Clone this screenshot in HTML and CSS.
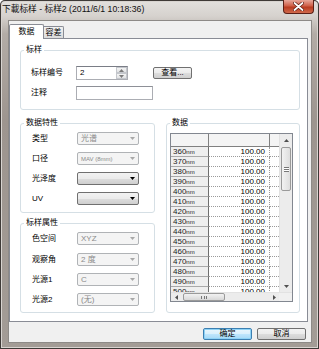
FILE: index.html
```html
<!DOCTYPE html>
<html lang="zh">
<head>
<meta charset="utf-8">
<title>下載标样</title>
<link rel="stylesheet" href="styles.css">
</head>
<body>
<div class="win">
  <div class="titlebar">
    <span class="title">下載标样 - 标样2 (2011/6/1 10:18:36)</span>
    <span class="close">
      <svg width="11" height="9" viewBox="0 0 11 9"><path d="M1.5 1 L9.5 8 M9.5 1 L1.5 8" stroke="#5a1a10" stroke-width="3.2" stroke-linecap="round"/><path d="M1.5 1 L9.5 8 M9.5 1 L1.5 8" stroke="#ffffff" stroke-width="1.8" stroke-linecap="round"/></svg>
    </span>
  </div>
  <div class="client">
    <div class="tabs">
      <div class="tab active">数据</div>
      <div class="tab">容差</div>
    </div>
    <div class="panel">
      <fieldset class="grp g1">
        <legend>标样</legend>
        <div class="frow">
          <span class="lbl l1">标样编号</span>
          <span class="spin"><span class="spin-val">2</span><span class="spin-btns"><span class="sb"><svg width="5" height="3" viewBox="0 0 5 3"><path d="M0 3 L2.5 0 L5 3Z" fill="#7a7a7a"/></svg></span><span class="sb"><svg width="5" height="3" viewBox="0 0 5 3"><path d="M0 0 L2.5 3 L5 0Z" fill="#7a7a7a"/></svg></span></span></span>
          <span class="btn view">查看...</span>
        </div>
        <div class="frow r2">
          <span class="lbl l1">注释</span>
          <span class="edit"></span>
        </div>
      </fieldset>
      <div class="cols">
        <div class="leftcol">
          <fieldset class="grp g2">
            <legend>数据特性</legend>
            <div class="frow"><span class="lbl">类型</span><span class="combo dis"><span class="cv">光谱</span><span class="arr"><svg width="5" height="3" viewBox="0 0 5 3"><path d="M0 0 L2.5 3 L5 0Z" fill="#a8a8a8"/></svg></span></span></div>
            <div class="frow"><span class="lbl">口径</span><span class="combo dis"><span class="cv sm">MAV (8mm)</span><span class="arr"><svg width="5" height="3" viewBox="0 0 5 3"><path d="M0 0 L2.5 3 L5 0Z" fill="#a8a8a8"/></svg></span></span></div>
            <div class="frow"><span class="lbl">光泽度</span><span class="combo en"><span class="cv"></span><span class="arr"><svg width="5" height="3" viewBox="0 0 5 3"><path d="M0 0 L2.5 3 L5 0Z" fill="#000"/></svg></span></span></div>
            <div class="frow"><span class="lbl">UV</span><span class="combo en"><span class="cv"></span><span class="arr"><svg width="5" height="3" viewBox="0 0 5 3"><path d="M0 0 L2.5 3 L5 0Z" fill="#000"/></svg></span></span></div>
          </fieldset>
          <fieldset class="grp g3">
            <legend>标样属性</legend>
            <div class="frow"><span class="lbl">色空间</span><span class="combo dis"><span class="cv">XYZ</span><span class="arr"><svg width="5" height="3" viewBox="0 0 5 3"><path d="M0 0 L2.5 3 L5 0Z" fill="#a8a8a8"/></svg></span></span></div>
            <div class="frow r8"><span class="lbl">观察角</span><span class="combo dis"><span class="cv">2 度</span><span class="arr"><svg width="5" height="3" viewBox="0 0 5 3"><path d="M0 0 L2.5 3 L5 0Z" fill="#a8a8a8"/></svg></span></span></div>
            <div class="frow"><span class="lbl">光源1</span><span class="combo dis"><span class="cv">C</span><span class="arr"><svg width="5" height="3" viewBox="0 0 5 3"><path d="M0 0 L2.5 3 L5 0Z" fill="#a8a8a8"/></svg></span></span></div>
            <div class="frow"><span class="lbl">光源2</span><span class="combo dis"><span class="cv">(无)</span><span class="arr"><svg width="5" height="3" viewBox="0 0 5 3"><path d="M0 0 L2.5 3 L5 0Z" fill="#a8a8a8"/></svg></span></span></div>
          </fieldset>
        </div>
        <fieldset class="grp gdata">
          <legend>数据</legend>
          <div class="tbl">
            <div class="tmain">
              <div class="cells">
                <div class="hc c1"></div><div class="hc c2"></div><div class="hc c3"></div>
                <div class="c1">360<small>nm</small></div><div class="c2">100.00</div><div class="c3"></div>
                <div class="c1">370<small>nm</small></div><div class="c2">100.00</div><div class="c3"></div>
                <div class="c1">380<small>nm</small></div><div class="c2">100.00</div><div class="c3"></div>
                <div class="c1">390<small>nm</small></div><div class="c2">100.00</div><div class="c3"></div>
                <div class="c1">400<small>nm</small></div><div class="c2">100.00</div><div class="c3"></div>
                <div class="c1">410<small>nm</small></div><div class="c2">100.00</div><div class="c3"></div>
                <div class="c1">420<small>nm</small></div><div class="c2">100.00</div><div class="c3"></div>
                <div class="c1">430<small>nm</small></div><div class="c2">100.00</div><div class="c3"></div>
                <div class="c1">440<small>nm</small></div><div class="c2">100.00</div><div class="c3"></div>
                <div class="c1">450<small>nm</small></div><div class="c2">100.00</div><div class="c3"></div>
                <div class="c1">460<small>nm</small></div><div class="c2">100.00</div><div class="c3"></div>
                <div class="c1">470<small>nm</small></div><div class="c2">100.00</div><div class="c3"></div>
                <div class="c1">480<small>nm</small></div><div class="c2">100.00</div><div class="c3"></div>
                <div class="c1">490<small>nm</small></div><div class="c2">100.00</div><div class="c3"></div>
                <div class="c1">500<small>nm</small></div><div class="c2">100.00</div><div class="c3"></div>
              </div>
              <div class="vscroll">
                <span class="sarr"><svg width="5" height="3" viewBox="0 0 5 3"><path d="M0 3 L2.5 0 L5 3Z" fill="#505050"/></svg></span>
                <span class="vthumb"><span class="grip"></span></span>
                <span class="vfill"></span>
                <span class="sarr"><svg width="5" height="3" viewBox="0 0 5 3"><path d="M0 0 L2.5 3 L5 0Z" fill="#505050"/></svg></span>
              </div>
            </div>
            <div class="hscroll">
              <span class="harr"><svg width="3" height="5" viewBox="0 0 3 5"><path d="M3 0 L0 2.5 L3 5Z" fill="#505050"/></svg></span>
              <span class="hthumb"><span class="hgrip"></span></span>
              <span class="hfill"></span>
              <span class="harr"><svg width="3" height="5" viewBox="0 0 3 5"><path d="M0 0 L3 2.5 L0 5Z" fill="#505050"/></svg></span>
              <span class="corner"></span>
            </div>
          </div>
        </fieldset>
      </div>
    </div>
    <div class="buttons">
      <span class="btn ok">确定</span>
      <span class="btn cancel">取消</span>
    </div>
  </div>
</div>
</body>
</html>
```
FILE: styles.css
```css
* { box-sizing: border-box; }
html, body { margin: 0; padding: 0; }
body {
  width: 319px;
  height: 349px;
  overflow: hidden;
  font-family: "Liberation Sans", "Noto Sans CJK SC", sans-serif;
  font-size: 8px;
  color: #000;
  background: #fff;
}
.win {
  width: 319px;
  height: 349px;
  display: flex;
  flex-direction: column;
  background: linear-gradient(to bottom, #e3e1de 0, #d6d2ce 16px, #b3aca6 34px, #9d958f 120px, #a39c96 100%);
  box-shadow: inset 0 0 0 1px #3e3a37, inset 0 0 0 2px #d8d4d0;
  border-radius: 5px 5px 0 0;
}
.titlebar {
  height: 20px;
  flex: none;
  display: flex;
  align-items: flex-start;
}
.title {
  padding: 4px 0 0 2px;
  font-size: 8.7px;
  line-height: 10px;
  white-space: nowrap;
  color: #111;
}
.close {
  margin-left: auto;
  margin-right: 5px;
  width: 31px;
  height: 14px;
  border: 1px solid #5a1f16;
  border-top: none;
  border-radius: 0 0 4px 4px;
  background: linear-gradient(#e7a89b, #cf5f47 45%, #b93b20 55%, #d0694b);
  display: flex;
  align-items: center;
  justify-content: center;
}
.client {
  flex: 1;
  margin: 0 7px 6px 8px;
  background: #f0f0f0;
  border: 1px solid #8d8a87;
  display: flex;
  flex-direction: column;
  padding: 3px 3px 0 0;
}
.tabs {
  height: 14px;
  display: flex;
  align-items: flex-end;
  flex: none;
}
.tab {
  height: 12px;
  width: 20px;
  border: 1px solid #898c95;
  border-bottom: none;
  border-left: none;
  background: linear-gradient(#f2f2f2, #dcdcdc);
  font-size: 8px;
  line-height: 11px;
  text-align: center;
  border-radius: 0 2px 0 0;
}
.tab.active {
  position: relative;
  z-index: 1;
  height: 15px;
  width: 35px;
  margin-bottom: -1px;
  background: #fff;
  border-left: 1px solid #898c95;
  border-radius: 2px 2px 0 0;
  line-height: 13px;
}
.panel {
  width: 299px;
  height: 284px;
  flex: none;
  background: #fff;
  border: 1px solid #898c95;
  padding: 5px 7px 7px 10px;
  display: flex;
  flex-direction: column;
}
.grp {
  margin: 0;
  min-width: 0;
  border: 1px solid #d5dfe5;
  border-radius: 3px;
  padding: 0 3px;
}
.grp legend {
  padding: 0 2px;
  font-size: 8px;
  line-height: 12px;
  height: 12px;
}
.g1 {
  padding-top: 10px;
  padding-bottom: 9px;
}
.frow {
  height: 13px;
  display: flex;
  align-items: center;
}
.g1 .frow { height: 14px; }
.g1 .r2 { margin-top: 6px; }
.lbl {
  width: 53px;
  padding-left: 8px;
  font-size: 8px;
  line-height: 10px;
  white-space: nowrap;
}
.lbl.l1 { width: 52px; padding-left: 7px; }
.spin {
  width: 52px;
  height: 14px;
  border: 1px solid #abadb3;
  border-top-color: #7a7d86;
  background: #fff;
  display: flex;
}
.spin-val {
  flex: 1;
  padding-left: 3px;
  line-height: 12px;
  font-size: 8px;
}
.spin-btns {
  width: 11px;
  display: flex;
  flex-direction: column;
}
.sb {
  flex: 1;
  border: 1px solid #c4c7cc;
  background: linear-gradient(#f4f4f4, #e2e3e5);
  display: flex;
  align-items: center;
  justify-content: center;
}
.btn {
  display: flex;
  align-items: center;
  justify-content: center;
  border: 1px solid #707070;
  border-radius: 2px;
  background: linear-gradient(#f3f3f3 0, #ebebeb 50%, #dddddd 51%, #cfcfcf 100%);
  font-size: 8px;
  line-height: 10px;
}
.btn.view {
  margin-left: 25px;
  width: 39px;
  height: 12px;
}
.edit {
  width: 77px;
  height: 14px;
  border: 1px solid #abadb3;
  border-top-color: #8e9097;
  background: #fff;
}
.cols {
  margin-top: 7px;
  display: flex;
  gap: 11px;
}
.leftcol {
  width: 135px;
  display: flex;
  flex-direction: column;
  gap: 4px;
}
.g2, .g3 {
  padding-top: 3px;
  padding-bottom: 7px;
  display: flex;
  flex-direction: column;
  gap: 7px;
}
.g3 .r8 { margin-top: 1px; }
.g3 .r8 + .frow { margin-top: 0; }
.g3 { padding-bottom: 6px; }
.combo {
  width: 62px;
  height: 13px;
  display: flex;
  align-items: center;
  border: 1px solid #b0b3b6;
  border-radius: 2px;
}
.combo.dis {
  background: #f4f4f4;
  color: #8a8a8a;
}
.combo.en {
  border-color: #707070;
  background: linear-gradient(#f2f2f2 0, #ebebeb 50%, #dddddd 51%, #cfcfcf 100%);
}
.cv {
  flex: 1;
  padding-left: 3px;
  font-size: 8px;
  line-height: 10px;
  white-space: nowrap;
}
.cv.sm { font-size: 6px; }
.arr {
  width: 9px;
  display: flex;
  align-items: center;
  justify-content: center;
  padding-right: 2px;
}
.gdata {
  width: 134px;
  padding: 4px 5px 10px 3px;
}
.tbl {
  width: 123px;
  height: 169px;
  border: 1px solid #828790;
  background: #fff;
  display: flex;
  flex-direction: column;
}
.tmain {
  height: 158px;
  display: flex;
}
.cells {
  width: 108px;
  overflow: hidden;
  display: grid;
  grid-template-columns: 38px 61px 9px;
  grid-template-rows: 13px;
  grid-auto-rows: 10px;
  font-size: 8px;
  line-height: 9px;
}
.cells > div { white-space: nowrap; overflow: hidden; }
.c1 {
  background: #efefef;
  border-right: 1px solid #6e6e6e;
  border-bottom: 1px solid #a9a9a9;
  padding-left: 2px;
  color: #222;
}
.c1 small { font-size: 6px; }
.c2 {
  border-right: 1px dotted #9a9a9a;
  border-bottom: 1px dotted #9a9a9a;
  text-align: right;
  padding-right: 4px;
}
.c3 {
  border-bottom: 1px dotted #9a9a9a;
}
.hc {
  background: #f4f4f4;
  border-right: 1px solid #808080;
  border-bottom: 1px solid #808080;
}
.hc.c3 { border-right: none; }
.vscroll {
  width: 13px;
  display: flex;
  flex-direction: column;
  background: #ececec;
  border-left: 1px solid #e2e2e2;
}
.sarr {
  height: 12px;
  display: flex;
  align-items: center;
  justify-content: center;
  flex: none;
}
.vthumb {
  height: 44px;
  margin: 1px 1px 0;
  border: 1px solid #9a9a9a;
  border-radius: 2px;
  background: linear-gradient(to right, #f2f2f2, #dedede);
  display: flex;
  align-items: center;
  justify-content: center;
}
.grip {
  width: 5px;
  height: 5px;
  border-top: 1px solid #777;
  border-bottom: 1px solid #777;
  background: linear-gradient(#fff 0, #fff 1px, #777 1px, #777 2px, #fff 2px);
}
.vfill { flex: 1; }
.hscroll {
  height: 9px;
  display: flex;
  align-items: stretch;
  background: #ececec;
  border-top: 1px solid #e2e2e2;
}
.harr {
  width: 10px;
  display: flex;
  align-items: center;
  justify-content: center;
}
.hthumb {
  width: 42px;
  margin-left: 2px;
  border: 1px solid #9a9a9a;
  border-radius: 2px;
  background: linear-gradient(#f2f2f2, #d8d8d8);
  display: flex;
  align-items: center;
  justify-content: center;
}
.hgrip {
  width: 6px;
  height: 3px;
  border-left: 1px solid #777;
  border-right: 1px solid #777;
  background: linear-gradient(to right, transparent 2px, #777 2px, #777 3px, transparent 3px);
}
.hfill { flex: 1; }
.corner {
  width: 13px;
  background: #f0f0f0;
}
.buttons {
  margin-top: 6px;
  display: flex;
  justify-content: flex-end;
  gap: 5px;
  padding-right: 2px;
}
.btn.ok, .btn.cancel {
  width: 49px;
  height: 12px;
}
.btn.ok {
  border-color: #3c7fb1;
  background: linear-gradient(#eaf6fd 0, #d9f0fc 50%, #bee6fd 51%, #a7d9f5 100%);
  box-shadow: inset 0 0 0 1px #8ed2f6;
}
```
